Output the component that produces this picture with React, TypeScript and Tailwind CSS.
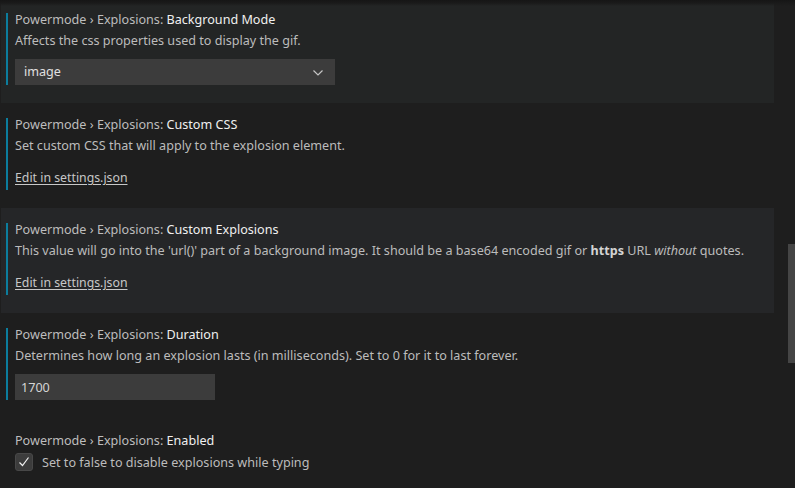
import React from "react";

const font = { fontFamily: '"Noto Sans", "Open Sans", sans-serif' };

function Title({ name }: { name: string }) {
  return (
    <div className="h-[18px] leading-[18px] text-[12.6px] whitespace-nowrap">
      <span className="text-[#bdbdbd]">Powermode › Explosions: </span>
      <span className="text-[#f0f0f0]">{name}</span>
    </div>
  );
}

function Desc({ children }: { children: React.ReactNode }) {
  return (
    <div className="mt-[3px] h-[18px] leading-[18px] text-[12.6px] text-[#bcbcbc] whitespace-nowrap">
      {children}
    </div>
  );
}

function Bar() {
  return <div className="absolute left-[5px] top-[15px] h-[72px] w-[2px] bg-[#0c7d9d]" />;
}

function EditLink() {
  return (
    <div className="mt-[14px] h-[18px] leading-[18px] text-[12.3px] text-[#c8c8c8] underline underline-offset-2">
      Edit in settings.json
    </div>
  );
}

export default function App() {
  return (
    <div className="relative h-[488px] w-[795px] overflow-hidden bg-[#1e1e1e]" style={font}>
      <div className="-mt-[2px] flex flex-col">
        {/* Background Mode */}
        <div className="relative ml-[1px] h-[105px] w-[773px] bg-[#232525] pl-[14px] pt-[13px]">
          <Bar />
          <Title name="Background Mode" />
          <Desc>Affects the css properties used to display the gif.</Desc>
          <div className="mt-[9px] flex h-[26px] w-[320px] items-center justify-between bg-[#3c3c3c] pl-[9px] pr-[11px] pt-[1px] text-[12.6px] text-[#e0e0e0]">
            <span>image</span>
            <svg width="12" height="8" viewBox="0 0 12 8" fill="none">
              <path d="M1.5 1.5 L6 6 L10.5 1.5" stroke="#c5c5c5" strokeWidth="1.2" />
            </svg>
          </div>
        </div>

        {/* Custom CSS */}
        <div className="relative ml-[1px] h-[105px] w-[773px] pl-[14px] pt-[13px]">
          <Bar />
          <Title name="Custom CSS" />
          <Desc>Set custom CSS that will apply to the explosion element.</Desc>
          <EditLink />
        </div>

        {/* Custom Explosions */}
        <div className="relative ml-[1px] h-[105px] w-[773px] bg-[#252628] pl-[14px] pt-[13px]">
          <Bar />
          <Title name="Custom Explosions" />
          <Desc>
            This value will go into the 'url()' part of a background image. It should be a base64 encoded gif or{" "}
            <b className="font-bold text-[#d4d4d4]">https</b> URL <i>without</i> quotes.
          </Desc>
          <EditLink />
        </div>

        {/* Duration */}
        <div className="relative ml-[1px] h-[105px] w-[773px] pl-[14px] pt-[13px]">
          <Bar />
          <Title name="Duration" />
          <Desc>Determines how long an explosion lasts (in milliseconds). Set to 0 for it to last forever.</Desc>
          <div className="mt-[9px] flex h-[26px] w-[200px] items-center bg-[#3c3c3c] pl-[6px] pt-[2px] text-[12.6px] text-[#d4d4d4]">
            1700
          </div>
        </div>

        {/* Enabled */}
        <div className="relative ml-[1px] h-[105px] w-[773px] pl-[14px] pt-[14px]">
          <Title name="Enabled" />
          <div className="mt-[3px] flex items-center gap-[9px]">
            <div className="flex h-[18px] w-[18px] items-center justify-center rounded-[3px] border border-[#484848] bg-[#3c3c3c]">
              <svg width="14" height="14" viewBox="0 0 14 14" fill="none">
                <path d="M2.5 7.5 L5.5 10.5 L11.5 2.5" stroke="#f0f0f0" strokeWidth="1.2" />
              </svg>
            </div>
            <span className="h-[18px] pt-[1px] leading-[18px] text-[12.6px] text-[#bcbcbc]">
              Set to false to disable explosions while typing
            </span>
          </div>
        </div>
      </div>

      {/* scroll shadow */}
      <div className="pointer-events-none absolute left-0 top-0 h-[6px] w-full bg-gradient-to-b from-[#161616] via-[#1a1a1a] to-transparent" />
      {/* scrollbar slider */}
      <div className="absolute left-[788px] top-[244px] h-[119px] w-[7px] bg-[#454545]" />
    </div>
  );
}
